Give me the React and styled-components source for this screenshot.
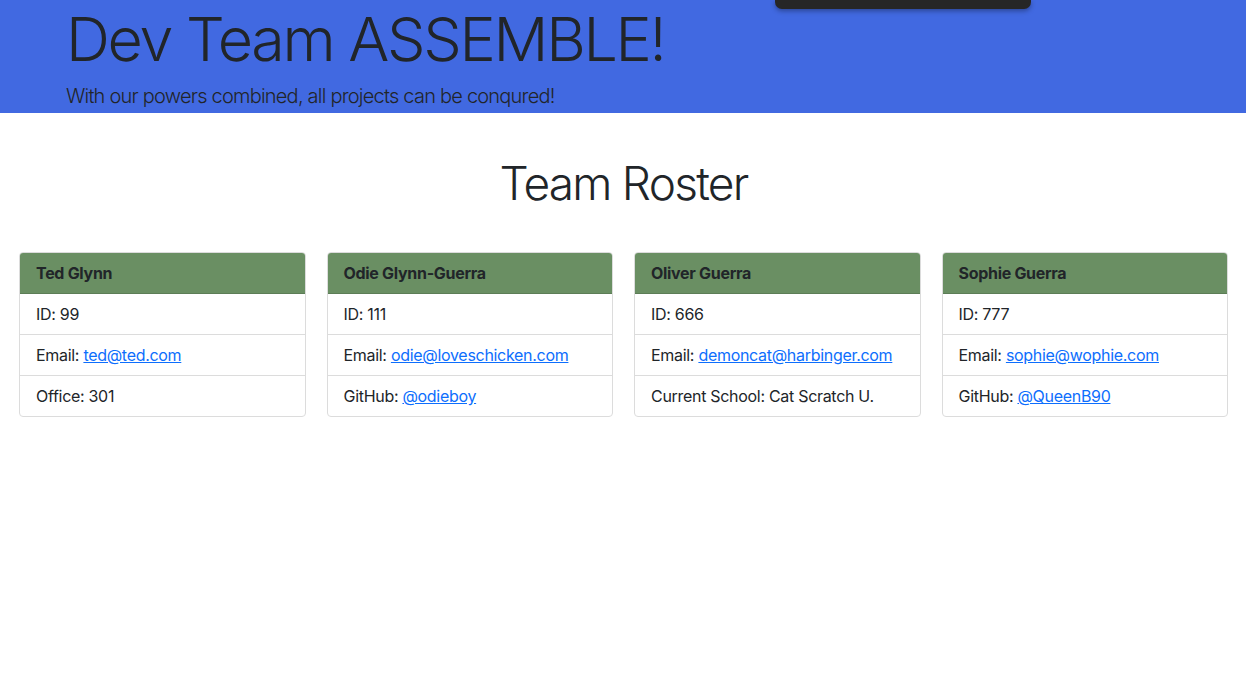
import React from 'react';
import styled, { createGlobalStyle } from 'styled-components';

const GlobalStyle = createGlobalStyle`
  body {
    margin: 0;
    font-family: Inter, "Liberation Sans", sans-serif;
    font-size: 16px;
    line-height: 1.5;
    letter-spacing: -0.3px;
    color: #212529;
    background: #fff;
  }
  * { box-sizing: border-box; }
`;

const Jumbotron = styled.header`
  position: relative;
  background: #4169e1;
  height: 113px;
  padding: 0 66px;
`;

const Title = styled.h1`
  margin: 0;
  padding-top: 1px;
  font-size: 61px;
  font-weight: 300;
  line-height: 77px;
  letter-spacing: -2.3px;
`;

const Lead = styled.p`
  margin: 3px 0 0;
  font-size: 20px;
  font-weight: 300;
  line-height: 30px;
  letter-spacing: -0.78px;
`;

const Overlay = styled.div`
  position: absolute;
  top: 0;
  left: 775px;
  width: 256px;
  height: 9px;
  background: #262626;
  border-radius: 0 0 7px 7px;
  box-shadow: 0 2px 5px rgba(0, 0, 0, 0.35);
`;

const Main = styled.main`
  padding: 0 18px 0 19px;
`;

const SectionTitle = styled.h2`
  margin: 41px 0 40px;
  text-align: center;
  font-size: 46px;
  font-weight: 300;
  line-height: 58px;
  letter-spacing: -1.75px;
`;

const Grid = styled.div`
  display: grid;
  grid-template-columns: repeat(4, 1fr);
  column-gap: 21px;
`;

const Card = styled.div`
  border: 1px solid #dcdcdc;
  border-radius: 4px;
  overflow: hidden;
`;

const CardHeader = styled.div`
  background: #6a8f63;
  padding: 8px 16px;
  font-weight: 700;
  border-bottom: 1px solid #5c7d56;
`;

const List = styled.ul`
  list-style: none;
  margin: 0;
  padding: 0;
`;

const Item = styled.li`
  padding: 8px 16px;
  border-top: ${({ $first }) => ($first ? 'none' : '1px solid #dcdcdc')};
`;

const A = styled.a`
  color: #0d6efd;
  text-decoration: underline;
`;

const team = [
  { name: 'Ted Glynn', id: 99, email: 'ted@ted.com', extra: { label: 'Office', value: '301' } },
  { name: 'Odie Glynn-Guerra', id: 111, email: 'odie@loveschicken.com', extra: { label: 'GitHub', link: '@odieboy' } },
  { name: 'Oliver Guerra', id: 666, email: 'demoncat@harbinger.com', extra: { label: 'Current School', value: 'Cat Scratch U.' } },
  { name: 'Sophie Guerra', id: 777, email: 'sophie@wophie.com', extra: { label: 'GitHub', link: '@QueenB90' } },
];

const App = () => {
  return (
    <>
      <GlobalStyle />
      <Jumbotron>
        <Title>Dev Team ASSEMBLE!</Title>
        <Lead>With our powers combined, all projects can be conqured!</Lead>
        <Overlay />
      </Jumbotron>
      <Main>
        <SectionTitle>Team Roster</SectionTitle>
        <Grid>
          {team.map((m) => (
            <Card key={m.name}>
              <CardHeader>{m.name}</CardHeader>
              <List>
                <Item $first>ID: {m.id}</Item>
                <Item>Email: <A href="#">{m.email}</A></Item>
                <Item>
                  {m.extra.label}: {m.extra.link ? <A href="#">{m.extra.link}</A> : m.extra.value}
                </Item>
              </List>
            </Card>
          ))}
        </Grid>
      </Main>
    </>
  );
};

export default App;
